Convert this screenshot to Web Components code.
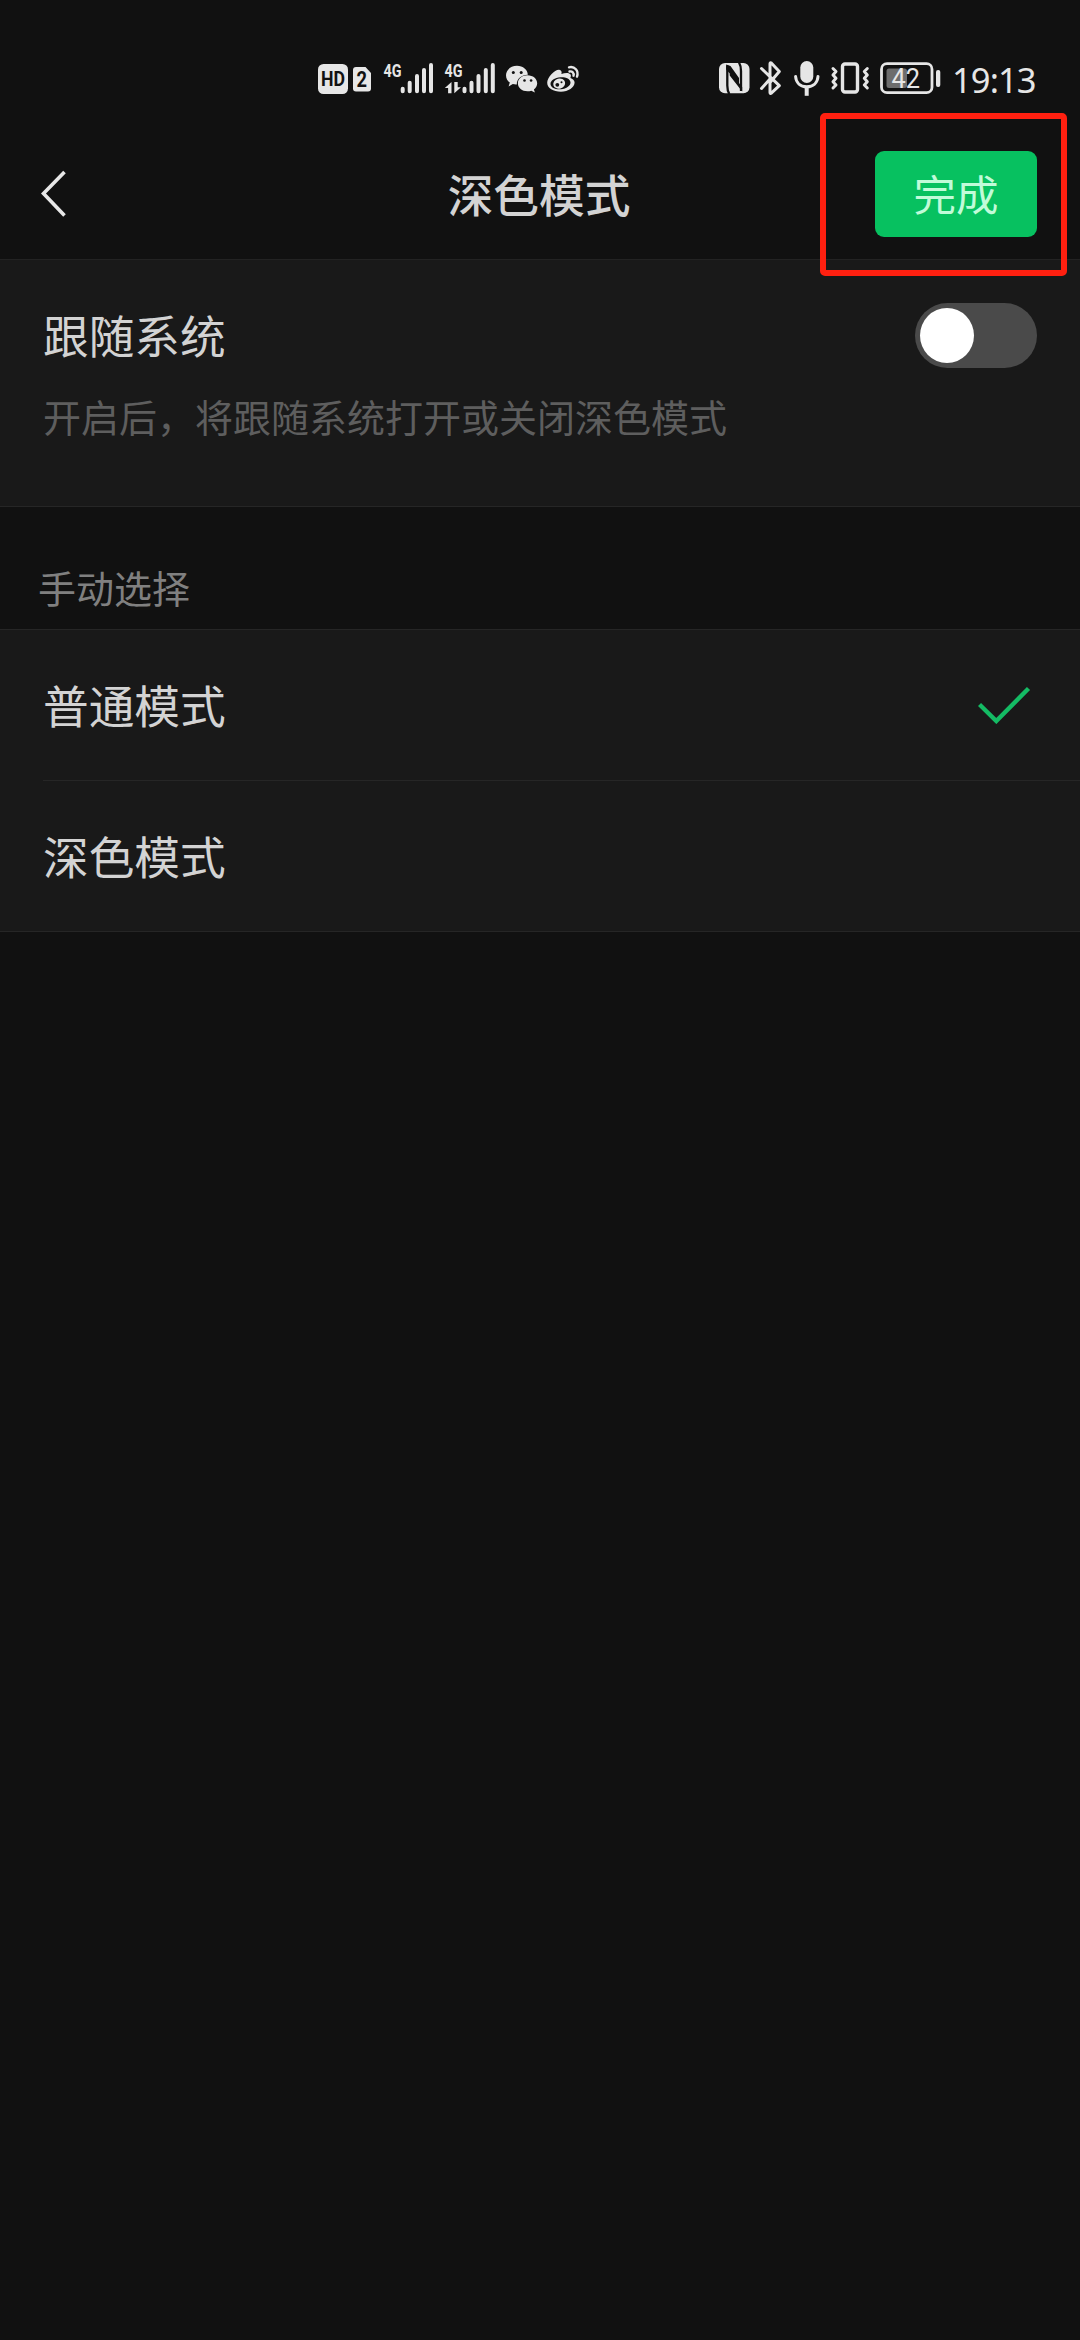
<!DOCTYPE html>
<html lang="zh-CN">
<head>
<meta charset="UTF-8">
<meta name="viewport" content="width=device-width, initial-scale=1">
<title>深色模式</title>
<style>
    html, body {
        margin: 0;
        background: #111111;
    }

    body {
        min-height: 2340px;
        color: #d3d3d3;
        font-family: "Noto Sans", "Noto Sans CJK SC", sans-serif;
    }
</style>
</head>
<body>
<settings-page>
    <phone-status slot="top" time="19:13"></phone-status>
    <nav-bar slot="top" heading="深色模式">
        <action-button>完成</action-button>
    </nav-bar>

    <cell-group tall>
        <setting-cell hint="开启后，将跟随系统打开或关闭深色模式">
            跟随系统
            <toggle-switch slot="end"></toggle-switch>
        </setting-cell>
    </cell-group>

    <section-title>手动选择</section-title>

    <cell-group lined>
        <choice-cell selected>普通模式</choice-cell>
        <choice-cell>深色模式</choice-cell>
    </cell-group>
</settings-page>

<script>
const CJK = '"Noto Sans CJK SC", sans-serif';

class SettingsPage extends HTMLElement {
    constructor() {
        super();
        this.attachShadow({ mode: 'open' }).innerHTML = `
            <style>
                :host {
                    display: flex;
                    flex-direction: column;
                    font-family: ${CJK};
                }
            </style>
            <slot name="top"></slot>
            <slot></slot>
        `;
    }
}

// Every icon is drawn on a 42px high strip, [x, width, markup]
const ICONS = {
    hd: [318, 30, `
        <rect x="318" y="64" width="30" height="30" rx="5.5"/>
        <text x="321" y="86.300" font-size="19.500" font-weight="700" fill="#111" textLength="24" lengthAdjust="spacingAndGlyphs">HD</text>`],
    sim: [353, 18, `
        <path d="M356 67h9.500l5.500 6v15.500a3 3 0 0 1-3 3h-12a3 3 0 0 1-3-3v-18.500a3 3 0 0 1 3-3z"/>
        <text x="356.500" y="87" font-size="21.500" font-weight="700" fill="#111" textLength="10.500" lengthAdjust="spacingAndGlyphs">2</text>`],
    signal: [384, 49.500, `
        <text x="383.500" y="76.500" font-size="19" font-weight="700" textLength="18" lengthAdjust="spacingAndGlyphs">4G</text>
        <path d="M402.700 88.700v2.500M409.700 82.700v8.500M417 76v15.200M424 70v21.200M431 65v26.200" class="bar"/>`],
    data: [444.500, 50, `
        <text x="444" y="76.500" font-size="19" font-weight="700" textLength="18" lengthAdjust="spacingAndGlyphs">4G</text>
        <path d="M451 82v11.300h-3.400v-5.300h-3.300zM453.800 93.300v-11.300h3.400v5.300h3.300z"/>
        <path d="M464 88.700v2.500M471 82.700v8.500M478 76v15.200M485.300 70v21.200M492.300 65v26.200" class="bar"/>`],
    wechat: [505.500, 31.500, `
        <path d="M516.500 65.800c6 0 10.800 4 10.800 9-6.500.2-11.200 4.200-11 9.700-1.400.1-2.800-.1-4-.4l-4.200 2.300 1.200-3.800c-2.400-1.700-3.800-4.200-3.800-7.300 0-5.300 4.900-9.500 11-9.500z"/>
        <path d="M527 75.300c5.500 0 9.700 3.600 9.700 8 0 2.600-1.300 4.700-3.300 6.100l1 3.200-3.600-1.900c-1.200.4-2.400.6-3.800.6-5.500 0-9.600-3.500-9.600-8s4.200-8 9.600-8z"/>
        <g fill="#111"><circle cx="512.800" cy="72.500" r="1.500"/><circle cx="520.700" cy="72.500" r="1.500"/><circle cx="524" cy="80.500" r="1.300"/><circle cx="530.600" cy="80.500" r="1.300"/></g>`],
    weibo: [547, 32.500, `
        <path fill-rule="evenodd" d="M559.800 70c1.700.5 2.200 2 1.600 4 3.600-1.500 8.200-1.600 9.200.6.500 1 .3 2.200-.2 3.300 2.200.7 4.200 2.100 4.200 4.600 0 4.800-6.400 9.200-13.700 9.200-7.500 0-13.700-3.600-13.700-8.900 0-5.700 8.600-14.200 12.600-12.800zM560.500 77.300c-5.800.3-10.300 3.400-10 6.900.3 3.400 5 5.500 10.500 5 5.500-.4 9.800-3.500 9.500-6.900-.3-3.400-4.600-5.300-10-5z"/>
        <ellipse cx="559.200" cy="83.600" rx="6" ry="5" transform="rotate(-15 559.200 83.600)"/>
        <g fill="#111"><circle cx="557.300" cy="84.800" r="1.900"/><circle cx="561.500" cy="82.300" r="1"/></g>
        <path class="line" stroke-width="2.400" d="M569 67.300c5.700-1.300 10 3.500 8 9.300M569.500 71.500c2.700-.6 4.700 1.500 4 4.200"/>`],
    nfc: [717.500, 30.500, `
        <rect x="717.500" y="63" width="30.500" height="30.300" rx="6"/>
        <path fill="none" stroke="#111" stroke-width="2.300" d="M727.800 94c-1.500-2.500-2-5-2-8.500v-20M737.500 62.500c1.500 2.500 2 5 2 8.500v20"/>
        <path fill="#111" d="M724.700 64.500l4.300 1.500 8.500 12v5l3.200 4v4.500l-12.500-16v-2l-3.500-4z"/>`],
    bluetooth: [758.500, 22, `
        <path class="line" stroke-width="3" d="M760 68.500l17.800 17.200-8 7.500c-.8.500-1.300.2-1.300-.7v-10l9.300-11-8-8.500c-.7-.6-1.300-.2-1.300.7v15.300L760 88.500"/>`],
    mic: [793, 25.500, `
        <rect x="799.300" y="61" width="13" height="22" rx="6.500"/>
        <path class="line" stroke-width="3" d="M794.600 76.500c.4 6.500 5 10.300 11.200 10.300s10.800-3.800 11.200-10.300"/>
        <path class="line" stroke-width="4" style="stroke-linecap:butt" d="M805.700 87v8.800"/>`],
    vibrate: [830, 38.500, `
        <rect x="841.500" y="64" width="15" height="28" rx="2.500" class="line" stroke-width="3.400"/>
        <path class="line" stroke-width="3" d="M832 68.500l3 3-3 3.400 3 3.400-3 3.400 3 3.300-3 3M866.300 68.500l-3 3 3 3.400-3 3.400 3 3.400-3 3.300 3 3"/>`],
    battery: [879, 60.500, `
        <rect x="880.500" y="63.700" width="50.500" height="29" rx="5.500" class="line" stroke-width="2.800"/>
        <rect x="885.500" y="68.500" width="20.500" height="19.500" rx="2.500" fill="#6d6d6d"/>
        <text x="890.500" y="88" font-size="27" textLength="28.500" lengthAdjust="spacingAndGlyphs">42</text>
        <rect x="935" y="70" width="4.300" height="17" rx="2"/>`]
};

class StatusIcon extends HTMLElement {
    constructor() {
        super();
        this.attachShadow({ mode: 'open' });
    }

    connectedCallback() {
        const [x, width, markup] = ICONS[this.getAttribute('name')];
        this.shadowRoot.innerHTML = `
            <style>
                :host { display: block; flex: none; }
                svg { display: block; overflow: visible; fill: #e6e6e6; }
                .bar { stroke: #e6e6e6; stroke-width: 4; stroke-linecap: round; }
                .line { fill: none; stroke: #e6e6e6; stroke-linecap: round; stroke-linejoin: round; }
                text { font-family: Roboto, sans-serif; }
            </style>
            <svg width="${width}" height="42" viewBox="${x} 58 ${width} 42">${markup}</svg>
        `;
    }
}

class PhoneStatus extends HTMLElement {
    constructor() {
        super();
        this.attachShadow({ mode: 'open' });
    }

    connectedCallback() {
        this.shadowRoot.innerHTML = `
            <style>
                :host {
                    box-sizing: border-box;
                    display: flex;
                    justify-content: space-between;
                    height: 129px;
                    padding: 58px 41px 0 318px;
                }
                .side { display: flex; height: 42px; }
                .left { gap: 11px; }
                .left status-icon:nth-child(2) { margin: 0 2px 0 -6px; }
                .left status-icon:nth-child(6) { margin-left: -1px; }
                .right { gap: 11.500px; }
                .right status-icon:first-child { margin-right: -1px; }
                .right status-icon:nth-child(3) { margin-left: 1px; }
                .right status-icon:last-of-type { margin-left: -1px; }
                time {
                    width: 87px;
                    color: #e6e6e6;
                    font: 34.500px/43px "Noto Sans", sans-serif;
                    letter-spacing: -0.9px;
                    white-space: nowrap;
                }
            </style>
            <div class="side left">
                <status-icon name="hd"></status-icon>
                <status-icon name="sim"></status-icon>
                <status-icon name="signal"></status-icon>
                <status-icon name="data"></status-icon>
                <status-icon name="wechat"></status-icon>
                <status-icon name="weibo"></status-icon>
            </div>
            <div class="side right">
                <status-icon name="nfc"></status-icon>
                <status-icon name="bluetooth"></status-icon>
                <status-icon name="mic"></status-icon>
                <status-icon name="vibrate"></status-icon>
                <status-icon name="battery"></status-icon>
                <time>${this.getAttribute('time')}</time>
            </div>
        `;
    }
}

class NavBar extends HTMLElement {
    constructor() {
        super();
        this.attachShadow({ mode: 'open' });
    }

    connectedCallback() {
        this.shadowRoot.innerHTML = `
            <style>
                :host {
                    box-sizing: border-box;
                    display: grid;
                    grid-template-columns: 1fr auto 1fr;
                    align-items: center;
                    height: 131px;
                    padding: 0 43px 0 41px;
                    border-bottom: 1px solid #232323;
                }
                svg { display: block; }
                h1 {
                    margin: 0;
                    padding-bottom: 2px;
                    font-size: 45.700px;
                    font-weight: 500;
                    line-height: 60px;
                }
                .end { justify-self: end; }
            </style>
            <svg width="25" height="48" viewBox="0 0 25 48" fill="none" stroke="#e8e8e8" stroke-width="3.600">
                <path d="M23.500 2L2.500 23.500 23.500 45.500"/>
            </svg>
            <h1>${this.getAttribute('heading')}</h1>
            <div class="end"><slot></slot></div>
        `;
    }
}

class ActionButton extends HTMLElement {
    constructor() {
        super();
        this.attachShadow({ mode: 'open' }).innerHTML = `
            <style>
                :host { display: block; position: relative; }
                button {
                    display: block;
                    width: 162px;
                    height: 86px;
                    padding: 0 0 2px;
                    border: 0;
                    border-radius: 9px;
                    background: #07c160;
                    color: #c1fbd9;
                    font: 42.500px/60px ${CJK};
                }
                /* red marker around the button */
                .marker {
                    position: absolute;
                    inset: -38px -30px -39px -55px;
                    box-sizing: border-box;
                    border: 6.500px solid #ff2010;
                    border-radius: 5px;
                    pointer-events: none;
                }
            </style>
            <button><slot></slot></button>
            <div class="marker"></div>
        `;
    }
}

class CellGroup extends HTMLElement {
    constructor() {
        super();
        this.attachShadow({ mode: 'open' }).innerHTML = `
            <style>
                :host {
                    display: block;
                    background: #191919;
                    border-bottom: 1px solid #262626;
                }
                :host([tall]) { height: 246px; }
                :host([lined]) { border-top: 1px solid #262626; }
            </style>
            <slot></slot>
        `;
    }
}

class SettingCell extends HTMLElement {
    constructor() {
        super();
        this.attachShadow({ mode: 'open' });
    }

    connectedCallback() {
        this.shadowRoot.innerHTML = `
            <style>
                :host { display: block; padding: 43px 43px 0; }
                .row {
                    display: flex;
                    align-items: center;
                    justify-content: space-between;
                    height: 65px;
                }
                .label { padding-bottom: 2px; font-size: 45.700px; line-height: 63px; }
                p {
                    margin: 22px 0 0;
                    color: #5e5e5e;
                    font-size: 38px;
                    line-height: 52px;
                }
            </style>
            <div class="row">
                <div class="label"><slot></slot></div>
                <slot name="end"></slot>
            </div>
            <p>${this.getAttribute('hint')}</p>
        `;
    }
}

class ToggleSwitch extends HTMLElement {
    constructor() {
        super();
        this.attachShadow({ mode: 'open' }).innerHTML = `
            <style>
                :host {
                    box-sizing: border-box;
                    display: flex;
                    width: 122px;
                    height: 65px;
                    padding: 5px;
                    border-radius: 33px;
                    background: #4a4a4a;
                }
                span {
                    width: 54px;
                    height: 55px;
                    border-radius: 50%;
                    background: #ffffff;
                }
            </style>
            <span></span>
        `;
    }
}

class SectionTitle extends HTMLElement {
    constructor() {
        super();
        this.attachShadow({ mode: 'open' }).innerHTML = `
            <style>
                :host {
                    box-sizing: border-box;
                    display: block;
                    height: 122px;
                    padding: 54px 38px 0;
                    color: #808080;
                    font-size: 38px;
                    line-height: 52px;
                }
            </style>
            <slot></slot>
        `;
    }
}

class ChoiceCell extends HTMLElement {
    constructor() {
        super();
        this.attachShadow({ mode: 'open' }).innerHTML = `
            <style>
                :host {
                    display: flex;
                    align-items: center;
                    justify-content: space-between;
                    height: 150px;
                    margin-left: 43px;
                    padding-right: 49px;
                    font-size: 45.700px;
                    line-height: 65px;
                }
                :host(:not(:last-child)) { border-bottom: 1px solid #262626; }
                span { padding-bottom: 2px; }
                svg { display: none; }
                :host([selected]) svg { display: block; }
            </style>
            <span><slot></slot></span>
            <svg width="53" height="38" viewBox="0 0 53 38" fill="none" stroke="#14bb64" stroke-width="4.400">
                <path d="M1.500 18.500L18.300 35 50.500 2.500"/>
            </svg>
        `;
    }
}

customElements.define('settings-page', SettingsPage);
customElements.define('status-icon', StatusIcon);
customElements.define('phone-status', PhoneStatus);
customElements.define('nav-bar', NavBar);
customElements.define('action-button', ActionButton);
customElements.define('cell-group', CellGroup);
customElements.define('setting-cell', SettingCell);
customElements.define('toggle-switch', ToggleSwitch);
customElements.define('section-title', SectionTitle);
customElements.define('choice-cell', ChoiceCell);
</script>
</body>
</html>
